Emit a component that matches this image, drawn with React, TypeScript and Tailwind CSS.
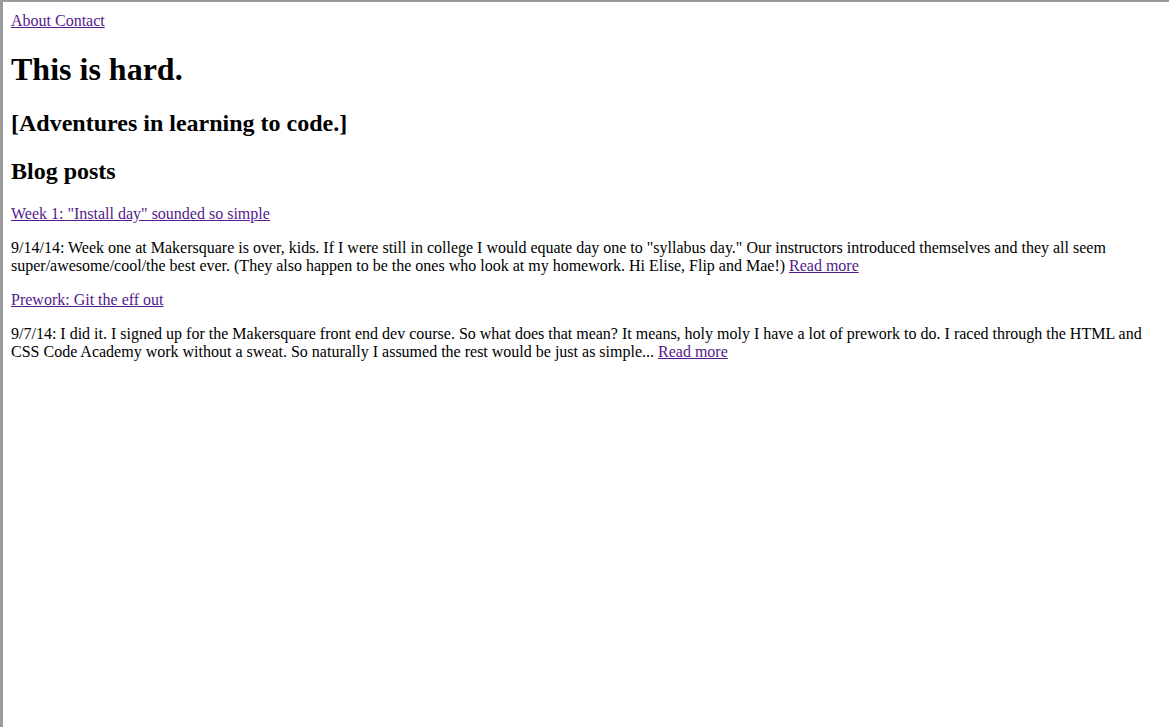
const posts = [
  {
    title: 'Week 1: "Install day" sounded so simple',
    excerpt:
      '9/14/14: Week one at Makersquare is over, kids. If I were still in college I would equate day one to "syllabus day." Our instructors introduced themselves and they all seem super/awesome/cool/the best ever. (They also happen to be the ones who look at my homework. Hi Elise, Flip and Mae!)',
  },
  {
    title: 'Prework: Git the eff out',
    excerpt:
      '9/7/14: I did it. I signed up for the Makersquare front end dev course. So what does that mean? It means, holy moly I have a lot of prework to do. I raced through the HTML and CSS Code Academy work without a sweat. So naturally I assumed the rest would be just as simple...',
  },
];

const link = 'text-[#551a8b] underline';

export default function App() {
  return (
    <div className="min-h-screen bg-white border-l-[3px] border-t-[2px] border-[#9b9b9b] font-['Liberation_Serif',serif] text-[16px] leading-[18px] text-black">
      <div className="m-2 pt-[2px]">
        <nav>
          <a href="#" className={link}>About Contact</a>
        </nav>

        <h1 className="mt-[21px] mb-[21px] text-[32px] leading-[37px] font-bold">This is hard.</h1>
        <h2 className="mt-[21px] text-[24px] leading-[28px] font-bold">[Adventures in learning to code.]</h2>
        <h2 className="mt-[20px] mb-[20px] text-[24px] leading-[28px] font-bold">Blog posts</h2>

        {posts.map((p) => (
          <div key={p.title}>
            <p className="my-4">
              <a href="#" className={link}>{p.title}</a>
            </p>
            <p className="my-4">
              {p.excerpt} <a href="#" className={link}>Read more</a>
            </p>
          </div>
        ))}
      </div>
    </div>
  );
}
